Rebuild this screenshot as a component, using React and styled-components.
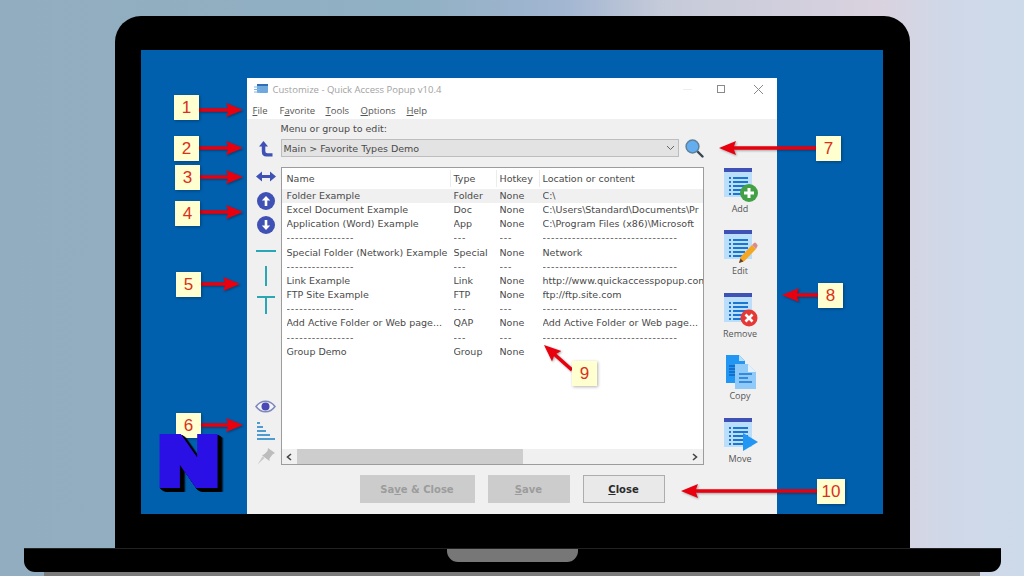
import styled, { createGlobalStyle } from "styled-components";

const GlobalStyle = createGlobalStyle`
    html, body {
        margin: 0;
        padding: 0;
        overflow: hidden;
    }
    u { text-underline-offset: 1px; }
`;

const Page = styled.div`
    position: relative;
    width: 1024px;
    height: 576px;
    overflow: hidden;
    display: flex;
    flex-direction: column;
    align-items: center;
    padding-top: 16px;
    box-sizing: border-box;
    background: linear-gradient(90deg, #92adbf 0%, #90b0c3 40%, #a2b6d2 55%, #c6cbd9 65%, #dad2df 86%, #d0d8e8 92%, #cddaea 100%);
    font-family: "DejaVu Sans", sans-serif;
`;

const Lid = styled.div`
    width: 795px;
    height: 532px;
    box-sizing: border-box;
    padding: 34px 27px 34px 26px;
    background: #000;
    border-radius: 26px 26px 0 0;
`;

const Screen = styled.div`
    height: 464px;
    padding: 28px 106px 0 106px;
    box-sizing: border-box;
    background: #0060ae;
    display: flex;
`;

const Base = styled.div`
    width: 977px;
    height: 24px;
    background: #000;
    border-top: 1px solid #222;
    box-sizing: border-box;
    border-radius: 0 0 11px 11px;
    display: flex;
    justify-content: center;
`;

const Notch = styled.div`
    width: 131px;
    height: 13px;
    background: #777;
    border-radius: 0 0 11px 11px;
`;

const Foot = styled.div`
    width: 936px;
    height: 4px;
    background: #7b7b7b;
`;

const Window = styled.div`
    width: 530px;
    height: 436px;
    background: #f0f0f0;
    display: flex;
    flex-direction: column;
    color: #4a4a4a;
`;

const TitleBar = styled.div`
    height: 22px;
    background: #fff;
    display: flex;
    align-items: center;
    padding: 0 14px 0 7px;
    gap: 5px;
    font-family: "Open Sans", sans-serif;
    font-size: 9.5px;
    color: #a2a2a2;
`;

const TitleText = styled.span`
    flex: 1;
`;

const WinControls = styled.div`
    display: flex;
    align-items: center;
`;

const MinButton = styled.span`
    width: 9px;
    height: 1px;
    background: #eee;
    margin-right: 25px;
`;

const MaxButton = styled.span`
    width: 8px;
    height: 8px;
    border: 1px solid #8a8a8a;
    box-sizing: border-box;
    margin-right: 29px;
`;

const MenuBar = styled.div`
    height: 19px;
    box-sizing: border-box;
    background: #fff;
    display: flex;
    align-items: center;
    padding: 2px 0 0 6px;
    font-family: "Open Sans", sans-serif;
    font-size: 9.5px;
    color: #555;
`;

const MenuItem = styled.span`
    width: ${({ $w }) => $w}px;
`;

const Body = styled.div`
    display: grid;
    grid-template-columns: 34px 423px 73px;
    grid-template-rows: 346px;
    height: 346px;
`;

const LeftTools = styled.div`
    display: flex;
    flex-direction: column;
    align-items: center;
    padding: 17px 0 0 4px;
    box-sizing: border-box;
`;

const ToolSlot = styled.div`
    height: ${({ $h }) => $h || 24}px;
    display: flex;
    align-items: center;
    justify-content: center;
    margin-top: ${({ $gap }) => $gap || 0}px;
    ${({ $push }) => $push && "margin-top: auto;"}
`;

const Center = styled.div`
    display: flex;
    flex-direction: column;
    padding-top: 4px;
    min-height: 0;
`;

const FieldLabel = styled.div`
    height: 12px;
    line-height: 12px;
    font-size: 9.5px;
    margin-bottom: 4px;
`;

const PickRow = styled.div`
    display: flex;
    align-items: center;
    justify-content: space-between;
    height: 18px;
    margin-bottom: 10px;
`;

const Dropdown = styled.div`
    width: 398px;
    height: 18px;
    box-sizing: border-box;
    background: #e3e3e3;
    border: 1px solid #bdbdbd;
    display: flex;
    align-items: center;
    justify-content: space-between;
    padding: 0 3px 0 2px;
    font-size: 9.5px;
`;

const ListBox = styled.div`
    flex: 1;
    min-height: 0;
    border: 1px solid #9c9c9c;
    background: #fff;
    display: flex;
    flex-direction: column;
    overflow: hidden;
`;

const HeaderRow = styled.div`
    display: grid;
    grid-template-columns: 167px 46px 43px 1fr;
    height: 21px;
    padding-left: 5px;
    align-items: stretch;
    font-size: 9.5px;
`;

const HeaderCell = styled.div`
    position: relative;
    display: flex;
    align-items: center;

    & + &::before {
        content: "";
        position: absolute;
        left: -4px;
        top: 2px;
        bottom: 2px;
        width: 1px;
        background: #ececec;
    }
`;

const Rows = styled.div`
    flex: 1;
    overflow: hidden;
`;

const Row = styled.div`
    display: grid;
    grid-template-columns: 167px 46px 43px 1fr;
    height: 14.17px;
    line-height: 14.17px;
    padding-left: 5px;
    font-size: 9.5px;
    white-space: nowrap;
    overflow: hidden;
    letter-spacing: ${({ $dashes }) => ($dashes ? "0.8px" : "0")};
    background: ${({ $selected }) => ($selected ? "#f0f0f0" : "transparent")};
`;

const Cell = styled.div`
    overflow: hidden;
`;

const ScrollBar = styled.div`
    height: 15px;
    background: #f0f0f0;
    display: flex;
    align-items: center;
`;

const ScrollButton = styled.div`
    width: 15px;
    height: 15px;
    display: flex;
    align-items: center;
    justify-content: center;
`;

const ScrollTrack = styled.div`
    flex: 1;
    height: 100%;
`;

const ScrollThumb = styled.div`
    width: 226px;
    height: 100%;
    background: #cdcdcd;
`;

const RightTools = styled.div`
    display: flex;
    flex-direction: column;
    align-items: center;
    padding-top: 49px;
    gap: 16.4px;
`;

const ToolItem = styled.div`
    width: 44px;
    display: flex;
    flex-direction: column;
    align-items: center;
`;

const ToolLabel = styled.span`
    font-family: "Open Sans", sans-serif;
    font-size: 9px;
    line-height: 11px;
    margin-top: -1px;
    color: #555;
`;

const Footer = styled.div`
    display: flex;
    gap: 13px;
    padding: 10px 0 11px 113px;
`;

const Button = styled.div`
    width: ${({ $w }) => $w}px;
    height: 28px;
    box-sizing: border-box;
    display: flex;
    align-items: center;
    justify-content: center;
    font-size: 10px;
    font-weight: 700;
    background: ${({ $disabled }) => ($disabled ? "#cccccc" : "#e9e9e9")};
    color: ${({ $disabled }) => ($disabled ? "#9c9c9c" : "#2b2b2b")};
    border: 1px solid ${({ $disabled }) => ($disabled ? "#cccccc" : "#adadad")};
`;

const CalloutBox = styled.div`
    position: absolute;
    left: ${({ $x }) => $x}px;
    top: ${({ $y }) => $y}px;
    width: ${({ $w }) => $w || 25}px;
    height: 25px;
    display: flex;
    align-items: center;
    justify-content: center;
    background: #ffffcf;
    box-shadow: 1px 1px 3px rgba(0, 0, 0, 0.3);
    color: #d9301c;
    font-family: "Liberation Sans", sans-serif;
    font-size: 17px;
`;

const ArrowLayer = styled.svg`
    position: absolute;
    left: 0;
    top: 0;
    pointer-events: none;
`;

const Logo = styled.div`
    position: absolute;
    left: 159px;
    top: 415px;
    font-family: "Liberation Sans", sans-serif;
    font-weight: 700;
    font-size: 66px;
    line-height: 92px;
    color: #2b10e6;
    -webkit-text-stroke: 8px #2b10e6;
    transform: scaleX(1.24);
    transform-origin: left top;
    filter: drop-shadow(1px 1px 0 #000) drop-shadow(1px 1px 0 #000) drop-shadow(1px 1px 0 #000) drop-shadow(1px 1px 0 #000);
`;

const columnsData = [
    ["Folder Example", "Folder", "None", "C:\\"],
    ["Excel Document Example", "Doc", "None", "C:\\Users\\Standard\\Documents\\Pr"],
    ["Application (Word) Example", "App", "None", "C:\\Program Files (x86)\\Microsoft"],
    ["----------------", "---", "---", "--------------------------------"],
    ["Special Folder (Network) Example", "Special", "None", "Network"],
    ["----------------", "---", "---", "--------------------------------"],
    ["Link Example", "Link", "None", "http://www.quickaccesspopup.com"],
    ["FTP Site Example", "FTP", "None", "ftp://ftp.site.com"],
    ["----------------", "---", "---", "--------------------------------"],
    ["Add Active Folder or Web page...", "QAP", "None", "Add Active Folder or Web page..."],
    ["----------------", "---", "---", "--------------------------------"],
    ["Group Demo", "Group", "None", ""],
];

const callouts = [
    { n: 1, x: 174, y: 95, from: [199, 110], tip: [243, 110] },
    { n: 2, x: 174, y: 136, from: [199, 148], tip: [243, 148] },
    { n: 3, x: 175, y: 165, from: [200, 177], tip: [243, 177] },
    { n: 4, x: 175, y: 201, from: [200, 212], tip: [243, 212] },
    { n: 5, x: 176, y: 272, from: [201, 284], tip: [240, 284] },
    { n: 6, x: 176, y: 413, from: [201, 425], tip: [243, 425] },
    { n: 7, x: 816, y: 136, from: [816, 148], tip: [719, 148] },
    { n: 8, x: 818, y: 283, from: [818, 295], tip: [782, 295] },
    { n: 9, x: 572, y: 361, from: [572, 370], tip: [544, 345] },
    { n: 10, x: 817, y: 479, w: 28, from: [817, 491], tip: [681, 491] },
];

// shaft and head of a callout arrow, pointing from -> tip
function arrowPoints(from, tip) {
    const dx = tip[0] - from[0];
    const dy = tip[1] - from[1];
    const len = Math.hypot(dx, dy);
    const ux = dx / len;
    const uy = dy / len;
    const px = -uy;
    const py = ux;
    const head = 15;
    const at = (along, side) =>
        `${from[0] + ux * along + px * side},${from[1] + uy * along + py * side}`;
    return [
        at(0, -1.8),
        at(len - head, -1.8),
        at(len - head - 2, -7),
        at(len, 0),
        at(len - head - 2, 7),
        at(len - head, 1.8),
        at(0, 1.8),
    ].join(" ");
}

function AppIcon() {
    return (
        <svg width="14" height="11" viewBox="0 0 14 11">
            <rect x="3" y="0" width="11" height="9" rx="1" fill="#6fa8dc" />
            <rect x="3" y="0" width="11" height="2" fill="#2f6fb5" />
            <path d="M0 3h6M0 5.5h6M0 8h6" stroke="#7fb6e6" strokeWidth="1" />
        </svg>
    );
}

function TurnUp() {
    return (
        <svg width="14" height="17" viewBox="0 0 14 17">
            <path d="M4.5 1 L9 6.5 H6.3 V11 Q6.3 13.2 8.5 13.2 H13.5 V16.5 H7.5 Q2.8 16.5 2.8 11.5 V6.5 H0 Z" fill="#3f51b5" />
        </svg>
    );
}

function Swap() {
    return (
        <svg width="20" height="11" viewBox="0 0 20 11">
            <path d="M0 5.5 L6 0.5 V4 H14 V0.5 L20 5.5 L14 10.5 V7 H6 V10.5 Z" fill="#3f51b5" />
        </svg>
    );
}

function RoundArrow({ down }) {
    return (
        <svg width="18" height="18" viewBox="0 0 18 18">
            <circle cx="9" cy="9" r="9" fill="#3f51b5" />
            <path
                d={down ? "M9 14 L4.8 9.5 H7.7 V4 H10.3 V9.5 H13.2 Z" : "M9 4 L13.2 8.5 H10.3 V14 H7.7 V8.5 H4.8 Z"}
                fill="#fff"
            />
        </svg>
    );
}

function SepLine() {
    return (
        <svg width="20" height="2" viewBox="0 0 20 2">
            <rect width="20" height="2" fill="#2aa7b5" />
        </svg>
    );
}

function SepColumn() {
    return (
        <svg width="2" height="20" viewBox="0 0 2 20">
            <rect width="2" height="20" fill="#2aa7b5" />
        </svg>
    );
}

function SepFull() {
    return (
        <svg width="18" height="18" viewBox="0 0 18 18">
            <path d="M0 1h18M9 1v17" stroke="#2aa7b5" strokeWidth="2" fill="none" />
        </svg>
    );
}

function Eye() {
    return (
        <svg width="21" height="15" viewBox="0 0 21 15">
            <path d="M1 7.5 C6 0.5 15 0.5 20 7.5 C15 14.5 6 14.5 1 7.5 Z" fill="#f4f4fa" stroke="#7d88bb" strokeWidth="1.5" />
            <circle cx="10.5" cy="7.5" r="4" fill="#4a48b2" />
        </svg>
    );
}

function SortBars() {
    return (
        <svg width="18" height="18" viewBox="0 0 18 18" fill="#4f9bd0">
            <rect x="0" y="0" width="3" height="2" />
            <rect x="0" y="4" width="6" height="2" />
            <rect x="0" y="8" width="9" height="2" />
            <rect x="0" y="12" width="13" height="2" />
            <rect x="0" y="16" width="18" height="2" />
        </svg>
    );
}

function Pin() {
    return (
        <svg width="18" height="17" viewBox="0 0 18 17">
            <path d="M11 0 L18 5 L15.5 6.5 L12.5 10.5 L12.5 13 L5 7.5 L7.5 6 L10.5 3 Z" fill="#bdbdbd" />
            <path d="M7.5 10 L0.5 16.5 L5.5 8.5 Z" fill="#c9c9c9" />
        </svg>
    );
}

function Magnifier() {
    return (
        <svg width="19" height="19" viewBox="0 0 19 19">
            <path d="M12 12 L17.5 17.5" stroke="#37474f" strokeWidth="2.4" strokeLinecap="round" />
            <circle cx="7.5" cy="7.5" r="6.4" fill="#64aef0" stroke="#5f8199" strokeWidth="1.5" />
        </svg>
    );
}

function Chevron() {
    return (
        <svg width="9" height="6" viewBox="0 0 9 6">
            <path d="M1 1 L4.5 4.5 L8 1" fill="none" stroke="#666" strokeWidth="1" />
        </svg>
    );
}

function ListSheet() {
    const rows = [9, 13, 17, 21, 25];
    const widths = [15, 15, 15, 12, 10];
    return (
        <>
            <rect x="2" y="0" width="28" height="29" fill="#bbdefb" />
            <rect x="2" y="0" width="28" height="4" fill="#3f51b5" />
            {rows.map((y, i) => (
                <g key={y} fill="#1976d2">
                    <rect x="7" y={y} width="2" height="2" />
                    <rect x="11" y={y} width={widths[i]} height="2" />
                </g>
            ))}
        </>
    );
}

function AddIcon() {
    return (
        <svg width="36" height="36" viewBox="0 0 36 36">
            <ListSheet />
            <circle cx="27" cy="25" r="9" fill="#43a047" />
            <path d="M27 20v10M22 25h10" stroke="#fff" strokeWidth="3" />
        </svg>
    );
}

function EditIcon() {
    return (
        <svg width="36" height="36" viewBox="0 0 36 36">
            <ListSheet />
            <path d="M17 33 L18.5 27 L30 15 L34 19 L22.5 31 Z" fill="#f5a623" />
            <path d="M30 15 L32 13 Q33 12 34 13 L35.5 15 Q36 16 35 17 L34 19 Z" fill="#d98c8c" />
            <path d="M17 33 L18.5 28.5 L21.5 31.5 Z" fill="#5d4037" />
        </svg>
    );
}

function RemoveIcon() {
    return (
        <svg width="36" height="36" viewBox="0 0 36 36">
            <ListSheet />
            <circle cx="27" cy="25" r="8.5" fill="#e53935" />
            <path d="M23.5 21.5l7 7M30.5 21.5l-7 7" stroke="#fff" strokeWidth="2.6" />
        </svg>
    );
}

function CopyIcon() {
    return (
        <svg width="36" height="36" viewBox="0 0 36 36">
            <path d="M4 0 H17 L23 6 V28 H4 Z" fill="#2196f3" />
            <path d="M17 0 L23 6 H17 Z" fill="#bbdefb" />
            <path d="M7 11h6M7 14h6M7 17h6M7 20h6" stroke="#0d47a1" strokeWidth="1" />
            <path d="M13 9 H26 L34 17 V34 H13 Z" fill="#90caf9" />
            <path d="M26 9 L34 17 H26 Z" fill="#e3f2fd" />
            <path d="M17 19h13M17 23h9M17 27h13" stroke="#1976d2" strokeWidth="1.5" />
        </svg>
    );
}

function MoveIcon() {
    return (
        <svg width="36" height="36" viewBox="0 0 36 36">
            <ListSheet />
            <path d="M21 15 L36 24 L21 33 Z" fill="#2196f3" />
        </svg>
    );
}

function ArrowGlyph({ right }) {
    return (
        <svg width="6" height="8" viewBox="0 0 6 8">
            <path d={right ? "M1 1 L4.5 4 L1 7" : "M5 1 L1.5 4 L5 7"} fill="none" stroke="#444" strokeWidth="1.6" />
        </svg>
    );
}

const rightTools = [
    { label: "Add", icon: <AddIcon /> },
    { label: "Edit", icon: <EditIcon /> },
    { label: "Remove", icon: <RemoveIcon /> },
    { label: "Copy", icon: <CopyIcon /> },
    { label: "Move", icon: <MoveIcon /> },
];

function App() {
    return (
        <Page>
            <GlobalStyle />
            <Lid>
                <Screen>
                    <Window>
                        <TitleBar>
                            <AppIcon />
                            <TitleText>Customize - Quick Access Popup v10.4</TitleText>
                            <WinControls>
                                <MinButton />
                                <MaxButton />
                                <svg width="9" height="9" viewBox="0 0 9 9">
                                    <path d="M0 0l9 9M9 0l-9 9" stroke="#8a8a8a" strokeWidth="1" />
                                </svg>
                            </WinControls>
                        </TitleBar>
                        <MenuBar>
                            <MenuItem $w={27}><u>F</u>ile</MenuItem>
                            <MenuItem $w={46}>F<u>a</u>vorite</MenuItem>
                            <MenuItem $w={35}><u>T</u>ools</MenuItem>
                            <MenuItem $w={46}><u>O</u>ptions</MenuItem>
                            <MenuItem $w={30}><u>H</u>elp</MenuItem>
                        </MenuBar>
                        <Body>
                            <LeftTools>
                                <ToolSlot><TurnUp /></ToolSlot>
                                <ToolSlot $gap={4}><Swap /></ToolSlot>
                                <ToolSlot $gap={1}><RoundArrow /></ToolSlot>
                                <ToolSlot><RoundArrow down /></ToolSlot>
                                <ToolSlot $gap={2}><SepLine /></ToolSlot>
                                <ToolSlot $gap={1}><SepColumn /></ToolSlot>
                                <ToolSlot $gap={5}><SepFull /></ToolSlot>
                                <ToolSlot $push $h={18}><Eye /></ToolSlot>
                                <ToolSlot $gap={7} $h={18}><SortBars /></ToolSlot>
                                <ToolSlot $gap={7} $h={18}><Pin /></ToolSlot>
                            </LeftTools>
                            <Center>
                                <FieldLabel>Menu or group to edit:</FieldLabel>
                                <PickRow>
                                    <Dropdown>
                                        <span>Main &gt; Favorite Types Demo</span>
                                        <Chevron />
                                    </Dropdown>
                                    <Magnifier />
                                </PickRow>
                                <ListBox>
                                    <HeaderRow>
                                        <HeaderCell>Name</HeaderCell>
                                        <HeaderCell>Type</HeaderCell>
                                        <HeaderCell>Hotkey</HeaderCell>
                                        <HeaderCell>Location or content</HeaderCell>
                                    </HeaderRow>
                                    <Rows>
                                        {columnsData.map((row, i) => (
                                            <Row key={i} $selected={i === 0} $dashes={row[1] === "---"}>
                                                {row.map((text, j) => (
                                                    <Cell key={j}>{text}</Cell>
                                                ))}
                                            </Row>
                                        ))}
                                    </Rows>
                                    <ScrollBar>
                                        <ScrollButton><ArrowGlyph /></ScrollButton>
                                        <ScrollTrack><ScrollThumb /></ScrollTrack>
                                        <ScrollButton><ArrowGlyph right /></ScrollButton>
                                    </ScrollBar>
                                </ListBox>
                            </Center>
                            <RightTools>
                                {rightTools.map((tool) => (
                                    <ToolItem key={tool.label}>
                                        {tool.icon}
                                        <ToolLabel>{tool.label}</ToolLabel>
                                    </ToolItem>
                                ))}
                            </RightTools>
                        </Body>
                        <Footer>
                            <Button $w={115} $disabled>Sa<u>v</u>e &amp; Close</Button>
                            <Button $w={82} $disabled><u>S</u>ave</Button>
                            <Button $w={82}><u>C</u>lose</Button>
                        </Footer>
                    </Window>
                </Screen>
            </Lid>
            <Base><Notch /></Base>
            <Foot />
            <ArrowLayer width="1024" height="576">
                {callouts.map((c) => (
                    <polygon key={c.n} points={arrowPoints(c.from, c.tip)} fill="#e8000f" style={{ filter: "drop-shadow(1px 1px 1px rgba(0,0,0,.35))" }} />
                ))}
            </ArrowLayer>
            {callouts.map((c) => (
                <CalloutBox key={c.n} $x={c.x} $y={c.y} $w={c.w}>{c.n}</CalloutBox>
            ))}
            <Logo>N</Logo>
        </Page>
    );
}

export default App;
